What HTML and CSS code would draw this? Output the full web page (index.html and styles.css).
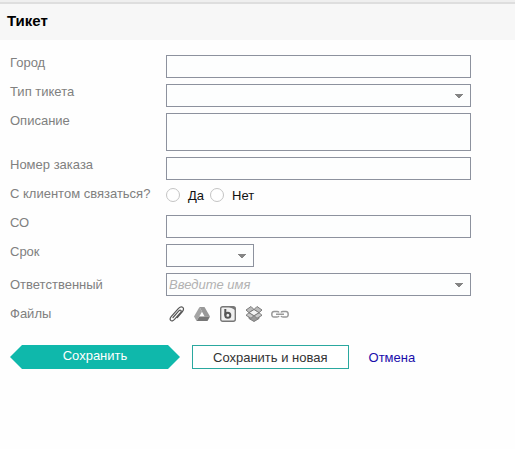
FILE: index.html
```html
<!DOCTYPE html>
<html lang="ru">
<head>
<meta charset="utf-8">
<meta name="viewport" content="width=device-width, initial-scale=1">
<title>Тикет</title>
<link rel="stylesheet" href="styles.css">
</head>
<body>
<header class="header"><h1 class="title">Тикет</h1></header>
<form class="form">
  <div class="row">
    <label class="label" for="city">Город</label>
    <input class="field" id="city" type="text">
  </div>
  <div class="row">
    <label class="label" for="type">Тип тикета</label>
    <select class="field select" id="type"><option></option></select>
  </div>
  <div class="row">
    <label class="label" for="description">Описание</label>
    <textarea class="field area" id="description"></textarea>
  </div>
  <div class="row">
    <label class="label" for="order">Номер заказа</label>
    <input class="field" id="order" type="text">
  </div>
  <div class="row" role="radiogroup" aria-labelledby="contact">
    <span class="label" id="contact">С клиентом связаться?</span>
    <div class="choices">
      <label class="choice"><input class="radio" type="radio" name="contact">Да</label>
      <label class="choice"><input class="radio" type="radio" name="contact">Нет</label>
    </div>
  </div>
  <div class="row">
    <label class="label" for="co">СО</label>
    <input class="field" id="co" type="text">
  </div>
  <div class="row">
    <label class="label" for="due">Срок</label>
    <select class="field select short" id="due"><option></option></select>
  </div>
  <div class="row middle">
    <label class="label" for="owner">Ответственный</label>
    <input class="field select" id="owner" type="text" placeholder="Введите имя">
  </div>
  <div class="row middle">
    <span class="label">Файлы</span>
    <div class="files">
      <button class="file" type="button" aria-label="Прикрепить файл">
        <svg viewBox="0 0 18 18" width="18" height="18"><path d="M6 12.500L11.800 5.900Q13 4.600 13.900 5.400Q14.600 6.200 13.500 7.600L7.500 14.300Q5.200 16.800 3.700 15.400Q2.300 14 4.200 11.700L11.500 3.400Q14 .9 15.800 2.400Q17.400 4 15.400 6.700L10.300 12.500" fill="none" stroke="#555" stroke-width="1.200" stroke-linecap="round"/></svg>
      </button>
      <button class="file" type="button" aria-label="Google Drive">
        <svg viewBox="0 0 18 18" width="18" height="18"><path d="M6.500 2H11.500L17 11.500H11.700L9 6.800Z" fill="#999"/><path d="M6.500 2L1 11.500L3.600 16L9 6.800Z" fill="#a4a4a4"/><path d="M6.300 11.500H17L14.500 16H3.600Z" fill="#777"/></svg>
      </button>
      <button class="file" type="button" aria-label="Box">
        <svg viewBox="0 0 18 18" width="18" height="18"><rect x="1.700" y="1.700" width="14.600" height="14.600" rx="2" fill="#f0f0f0" stroke="#777" stroke-width="1.400"/><path d="M10 2H16V5L13.500 3.500Z" fill="#777"/><path d="M6.300 4V10.500" stroke="#555" stroke-width="2" fill="none"/><circle cx="8.800" cy="10.200" r="2.500" fill="none" stroke="#555" stroke-width="2"/></svg>
      </button>
      <button class="file" type="button" aria-label="Dropbox">
        <svg viewBox="0 0 18 18" width="18" height="18"><g stroke="#7c7c7c" stroke-width="1" stroke-linejoin="round"><path d="M4 8L9 5L14 8V13.500L9 16.500L4 13.500Z" fill="#999"/><path d="M6 1.500L9 4.500L4 7.700L1 5Z" fill="#bbb"/><path d="M12 1.500L17 5L14 7.700L9 4.500Z" fill="#bbb"/><path d="M4 7.700L9 10.700L6 13.300L1 10.300Z" fill="#c8c8c8"/><path d="M14 7.700L17 10.300L12 13.300L9 10.700Z" fill="#c8c8c8"/><path d="M9 4.500L14 7.700L9 10.700L4 7.700Z" fill="#f4f4f4"/></g></svg>
      </button>
      <button class="file" type="button" aria-label="Ссылка">
        <svg viewBox="0 0 18 18" width="18" height="18"><path d="M8 7.500Q7.500 6.500 6 6.500H3Q.8 6.500 .8 9.300T3 12H6Q7.500 12 8 11M10 7.500Q10.500 6.500 12 6.500H15Q17.200 6.500 17.200 9.300T15 12H12Q10.500 12 10 11M5 9.300H13" fill="none" stroke="#999" stroke-width="1.500"/></svg>
      </button>
    </div>
  </div>
  <div class="actions">
    <button class="save" type="submit">Сохранить</button>
    <button class="save-new" type="button">Сохранить и новая</button>
    <a class="cancel" href="#">Отмена</a>
  </div>
</form>
</body>
</html>
```
FILE: styles.css
```css
* {
  box-sizing: border-box;
}

body {
  margin: 0;
  background: #fefefe;
  color: #111;
  font: 13px/15px "Liberation Sans", Arial, sans-serif;
}

.header {
  padding: 9px 7px;
  border-top: 2px solid #efefef;
  background: #f7f7f7;
  box-shadow: inset 0 2px 0 #dedede;
}

.title {
  margin: 0;
  color: #000;
  font-size: 15px;
  line-height: 20px;
}

.form {
  display: flex;
  flex-direction: column;
  gap: 6px;
  padding: 15px 44px 16px 10px;
}

.row {
  display: grid;
  grid-template-columns: 156px minmax(0, 1fr);
  align-items: start;
  min-height: 23px;
}

.middle {
  align-items: center;
}

.label {
  color: #808080;
}

.field {
  display: block;
  width: 100%;
  height: 23px;
  margin: 0;
  padding: 0 2px;
  border: 1px solid #8d929e;
  border-radius: 0;
  background: #fdfefe;
  color: #111;
  font: inherit;
}

.field::placeholder {
  color: #b2b2b2;
  font-style: italic;
  opacity: 1;
}

.area {
  height: 38px;
  resize: none;
}

/* Two half triangles form the drop-down arrow. */
.select {
  appearance: none;
  padding-right: 20px;
  background-image: linear-gradient(45deg, transparent 50%, #858585 50%),
    linear-gradient(315deg, transparent 50%, #858585 50%);
  background-position: right 11px top 9px, right 7px top 9px;
  background-size: 4px 4px;
  background-repeat: no-repeat;
}

.short {
  width: 88px;
}

.choices {
  display: flex;
  align-items: center;
  gap: 6px;
  min-height: 18px;
}

.choice {
  display: flex;
  align-items: center;
  gap: 8px;
}

.radio {
  appearance: none;
  width: 14px;
  height: 14px;
  margin: 0;
  border: 1px solid #c4c4c4;
  border-radius: 50%;
  background: #fff;
}

.files {
  display: flex;
  gap: 8px;
  padding-left: 1px;
}

.file {
  display: flex;
  width: 18px;
  height: 18px;
  padding: 0;
  border: 0;
  background: none;
}

.actions {
  display: flex;
  align-items: center;
  padding-top: 14px;
}

.save,
.save-new {
  height: 24px;
  padding: 0 20px;
  font: inherit;
}

.save {
  width: 170px;
  margin-right: 12px;
  padding-bottom: 3px;
  border: 0;
  background: #0fb8ab;
  clip-path: polygon(12px 0, calc(100% - 12px) 0, 100% 50%, calc(100% - 12px) 100%, 12px 100%, 0 50%);
  color: #fff;
}

.save-new {
  margin-right: 20px;
  border: 1px solid #2aa89f;
  background: #fff;
  color: #333;
}

.cancel {
  color: #1a0dab;
  text-decoration: none;
}
```
